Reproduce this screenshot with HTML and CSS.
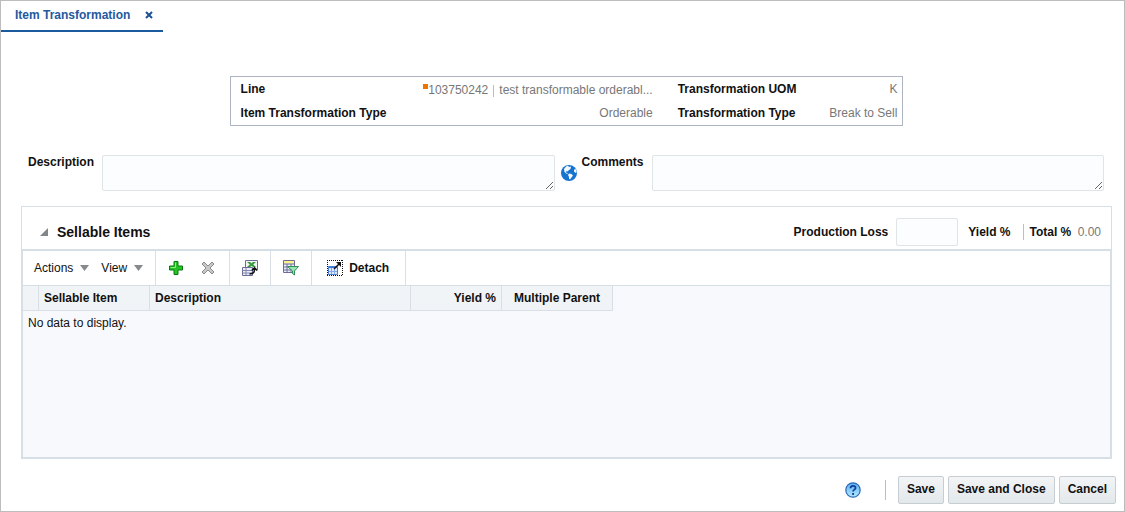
FILE: index.html
```
<!DOCTYPE html>
<html lang="en">
<head>
<meta charset="utf-8">
<title>Item Transformation</title>
<link rel="stylesheet" href="styles.css">
</head>
<body>
<div class="page">
  <nav class="tabs">
    <div class="tab">
      <a class="tab-link" href="#">Item Transformation</a>
      <button class="tab-close" type="button" aria-label="Close tab">
        <svg width="8" height="8" viewBox="0 0 8 8"><path d="M1 1l6 6M7 1L1 7" stroke="#1c4f96" stroke-width="2"/></svg>
      </button>
    </div>
  </nav>

  <dl class="summary">
    <dt>Line</dt>
    <dd class="line-value"><span class="marker"></span><span>103750242</span><span class="bar"></span><span>test transformable orderabl...</span></dd>
    <dt>Transformation UOM</dt>
    <dd>K</dd>
    <dt>Item Transformation Type</dt>
    <dd>Orderable</dd>
    <dt>Transformation Type</dt>
    <dd>Break to Sell</dd>
  </dl>

  <form class="content">
    <div class="notes">
      <label for="description">Description</label>
      <textarea id="description"></textarea>
      <button class="globe" type="button" aria-label="Translate">
        <svg width="16" height="16" viewBox="0 0 16 16"><circle cx="8" cy="8" r="8" fill="#1673cf"/><path d="M5 1.500L7 .8 8 2l2-.5L9.500 4 8 5 6.500 6.500 5.500 6 5 7.500l2 1-1 .5-2.500-2L3 4z" fill="#f4f9fe"/><path d="M8 8.500l2.500.5 1.500 1.500-1.500 2-1.500 2-1-1V12L7 10z" fill="#f4f9fe"/><path d="M13 4.500l1.800-.2 1 2.700-1.300 1-1.500-1.500z" fill="#f4f9fe"/></svg>
      </button>
      <label for="comments">Comments</label>
      <textarea id="comments"></textarea>
    </div>

    <section class="panel">
      <header class="panel-head">
        <button class="disclose" type="button" aria-label="Collapse">
          <svg width="8" height="8" viewBox="0 0 8 8"><path d="M8 0v8H0z" fill="#828689"/></svg>
        </button>
        <h2>Sellable Items</h2>
        <label for="loss">Production Loss</label>
        <input id="loss" type="text">
        <span class="yield">Yield %</span>
        <span class="total">Total % <span class="amount">0.00</span></span>
      </header>

      <div class="toolbar">
        <div class="group menus">
          <button type="button">Actions <svg width="9" height="6" viewBox="0 0 9 6"><path d="M0 0h9L4.500 6z" fill="#858a8d"/></svg></button>
          <button type="button">View <svg width="9" height="6" viewBox="0 0 9 6"><path d="M0 0h9L4.500 6z" fill="#858a8d"/></svg></button>
        </div>
        <div class="group edit">
          <button type="button" aria-label="Add">
            <svg width="16" height="16" viewBox="0 0 16 16"><path d="M6 1.500h4V6h4.500v4H10v4.500H6V10H1.500V6H6z" fill="#25c225" stroke="#087a0b"/><path d="M7.500 2.500v5h-5" stroke="#93ee84" fill="none"/></svg>
          </button>
          <button type="button" aria-label="Delete">
            <svg width="16" height="16" viewBox="0 0 16 16"><path d="M2 4l2-2 4 4 4-4 2 2-4 4 4 4-2 2-4-4-4 4-2-2 4-4z" fill="#c8c8c8" stroke="#8b8b8b"/></svg>
          </button>
        </div>
        <div class="group single">
          <button type="button" aria-label="Export to Excel">
            <svg width="16" height="16" viewBox="0 0 16 16"><path d="M3.500.5h12v9h-12z" fill="#f2f7f2" stroke="#6b6c98"/><path d="M5 2h3l1.500 1.200L11 2h3l-2.800 2.500L14 7h-3L9.500 5.800 8 7H5l2.800-2.500z" fill="#3a9b3e"/><path d="M.5 7.500h10v8H.5z" fill="#eceefa" stroke="#6b6c98"/><path d="M.5 10.500h10M.5 13h10M4 8v7" stroke="#8687ae"/><path d="M7.500 14c4.500 0 5-2 5-5.500M9.800 10.500l2.700-2.700 2.700 2.700" fill="none" stroke="#111" stroke-width="1.600"/></svg>
          </button>
        </div>
        <div class="group single">
          <button type="button" aria-label="Query by Example">
            <svg width="16" height="16" viewBox="0 0 16 16"><path d="M.5.5h11v12H.5z" fill="#eceefa" stroke="#6b6c98"/><path d="M1 1h10v2.500H1z" fill="#fff28a"/><path d="M.5 4h11M.5 7h11M.5 10h8M4 4v9M8 4v9" stroke="#6b6c98"/><path d="M4.500 6.500h11L11.500 11v4l-2-1.500V11z" fill="#9be3b2" stroke="#31905a"/></svg>
          </button>
        </div>
        <div class="group detach">
          <button type="button">
            <svg width="16" height="16" viewBox="0 0 16 16"><path d="M0 .5h16M0 15.500h16M.5 0v16M15.500 0v16" stroke="#111" stroke-dasharray="1 1"/><path d="M1.500 6.500h9v8h-9z" fill="#dce9ff" stroke="#4b7fd5"/><path d="M2 7.500h8" stroke="#3872d2" stroke-width="1"/><path d="M4.500 8v6M7.500 8v6M2 11.500h8" stroke="#83a9ea"/><path d="M7 9l5-5" stroke="#111" stroke-width="1.500"/><path d="M9 2h5v5z" fill="#111"/></svg>
            Detach
          </button>
        </div>
      </div>

      <div class="table-area">
        <table>
          <thead>
            <tr><td class="col-select"></td><th class="col-item">Sellable Item</th><th class="col-desc">Description</th><th class="col-yield">Yield %</th><th class="col-parent">Multiple Parent</th></tr>
          </thead>
        </table>
        <p class="empty">No data to display.</p>
      </div>
    </section>

    <footer class="actions">
      <button class="help" type="button" aria-label="Help">
        <svg width="16" height="16" viewBox="0 0 16 16"><defs><linearGradient id="sky" x2="0" y2="1"><stop stop-color="#58b0f5"/><stop offset="1" stop-color="#b4e9ff"/></linearGradient></defs><circle cx="8" cy="8" r="7.200" fill="url(#sky)" stroke="#2c69b8" stroke-width="1.200"/><path d="M5.500 6.300c0-3.200 5-3.200 5-.4 0 1.800-2.400 1.700-2.400 3.600M8.100 11v2" fill="none" stroke="#123f98" stroke-width="1.800"/></svg>
      </button>
      <button class="btn" type="button">Save</button>
      <button class="btn" type="button">Save and Close</button>
      <button class="btn" type="button">Cancel</button>
    </footer>
  </form>
</div>
</body>
</html>
```
FILE: styles.css
```
* { box-sizing: border-box; }
body { margin: 0; font: 12px/16px "Liberation Sans", Arial, sans-serif; color: #111; background: #fff; }
button { font: inherit; color: inherit; background: none; border: 0; padding: 0; display: flex; align-items: center; }
svg { display: block; flex: none; }
label { font-weight: bold; }

.page { min-height: 100vh; border: 1px solid #bdbdbd; display: flex; flex-direction: column; }
.tabs { display: flex; }
.tab { display: flex; align-items: center; gap: 15px; height: 31px; padding: 0 10px 1px 14px; border-bottom: 2px solid #1c5a9e; }
.tab-link { color: #2459a0; font-weight: bold; text-decoration: none; }

.summary { width: 60%; margin: 44px 0 0 calc(20% + 4px); border: 1px solid #aeb5c2; padding: 0 5px 0 10px; display: grid; grid-template-columns: auto 1fr auto 101px; line-height: 24px; }
.summary dt { font-weight: bold; }
.summary dt:nth-of-type(even) { padding-left: 25px; }
.summary dd { margin: 0; color: #777; text-align: right; }
.line-value { display: flex; justify-content: flex-end; align-items: center; white-space: nowrap; padding-top: 3px; line-height: 21px; }
.marker { width: 5px; height: 5px; background: #ec7600; margin-bottom: 8px; }
.bar { width: 1px; height: 12px; background: #b7bfc7; margin: 0 5px; }

.content { flex: 1; display: flex; flex-direction: column; padding: 29px 12px 7px 20px; }
.notes { display: grid; grid-template-columns: auto 1fr 22px auto 1fr; padding: 0 8px 0 7px; }
.notes textarea { height: 36px; width: 100%; margin: 0; border: 1px solid #dfe4e7; border-radius: 2px; background: #fcfdfe; resize: vertical; display: block; }
.notes label { padding-right: 8px; line-height: 14px; }
.globe { margin: 10px 0 0 6px; height: 16px; }
.notes label[for="comments"] { padding-left: 5px; }

.panel { flex: 1; margin-top: 15px; border: 1px solid #d6dfe6; border-bottom-width: 2px; display: flex; flex-direction: column; }
.panel-head { height: 44px; padding: 7px 10px 0 18px; display: flex; align-items: center; border-bottom: 2px solid #d6dfe6; }
.panel-head h2 { margin: 0 auto 0 9px; font-size: 14px; line-height: 18px; }
.panel-head input { width: 62px; height: 28px; margin: 0 10px 0 8px; border: 1px solid #dfe4e7; border-radius: 2px; background: #fcfdfe; }
.yield, .total { font-weight: bold; }
.total { margin-left: 12px; padding-left: 6px; border-left: 1px solid #b7bfc7; }
.amount { font-weight: normal; color: #777; margin-left: 3px; }

.toolbar { display: flex; height: 35px; border: solid #d6dfe6; border-width: 0 1px 1px; }
.group { display: flex; align-items: center; border-right: 1px solid #d9dfe4; }
.menus { gap: 12px; padding: 0 12px 0 11px; }
.menus button { gap: 7px; }
.edit { gap: 16px; padding: 0 13px 0 12px; }
.single { padding: 0 12px; }
.detach { padding: 0 16px 0 15px; font-weight: bold; }
.detach button { gap: 6px; }

.table-area { flex: 1; background: #f7f9fd; border: solid #d6dfe6; border-width: 0 1px; }
table { border-collapse: separate; border-spacing: 0; table-layout: fixed; width: 590px; }
th, td { height: 25px; padding: 0 5px; background: #f1f4f7; border: solid #d9dfe4; border-width: 0 1px 1px 0; text-align: left; }
.col-select { width: 16px; }
.col-item { width: 111px; }
.col-desc { width: 261px; }
.col-yield { width: 91px; text-align: right; }
.col-parent { width: 111px; text-align: center; }
.empty { margin: 4px 0 0 5px; }

.actions { display: flex; justify-content: flex-end; gap: 4px; padding: 17px 0 0; margin-right: -4px; }
.help { margin-right: 8px; padding-right: 24px; border-right: 1px solid #b7bfc7; height: 20px; align-self: center; }
.btn { height: 28px; padding: 0 8px 2px; border: 1px solid #c6cdd3; border-radius: 2px; background: linear-gradient(#f2f4f6, #e3e8eb); font-weight: bold; }
```
